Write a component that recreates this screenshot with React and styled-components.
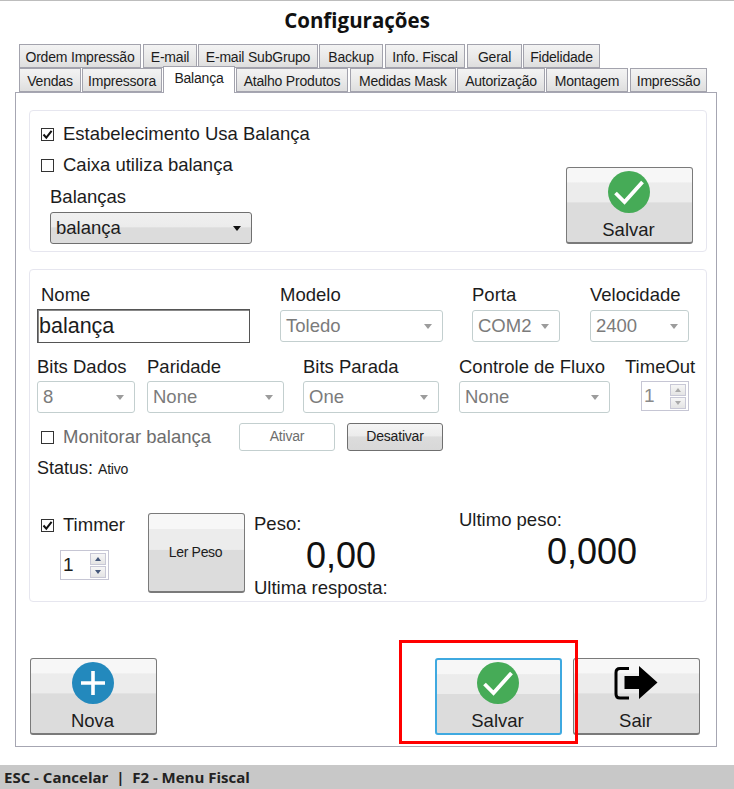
import React from 'react'
import styled, { createGlobalStyle } from 'styled-components'

const GlobalStyle = createGlobalStyle`
  html, body {
    margin: 0;
    padding: 0;
    background: #fff;
  }
  * {
    box-sizing: border-box;
  }
`

const Page = styled.div`
  width: 734px;
  height: 789px;
  overflow: hidden;
  display: flex;
  flex-direction: column;
  border-top: 1px solid #bdbdbd;
  font-family: 'Liberation Sans', Arial, sans-serif;
  color: #1c1c1c;
`

const Title = styled.h1`
  margin: 0;
  height: 43px;
  padding-right: 20px;
  display: flex;
  align-items: center;
  justify-content: center;
  padding-bottom: 5px;
  font-family: 'Open Sans', sans-serif;
  font-size: 20.5px;
  font-weight: 700;
  color: #111;
`

const TabRow = styled.div`
  display: flex;
  height: 24px;
  padding-left: 19px;
  align-items: flex-end;
`

const Tab = styled.div`
  width: ${(p) => p.$w}px;
  margin-right: ${(p) => p.$mr ?? 1}px;
  height: ${(p) => (p.$active ? 27 : 24)}px;
  margin-bottom: ${(p) => (p.$active ? -1 : 0)}px;
  display: flex;
  align-items: center;
  justify-content: center;
  padding-top: ${(p) => (p.$active ? 0 : 2)}px;
  padding-bottom: ${(p) => (p.$active ? 5 : 0)}px;
  border: 1px solid #a3a3ad;
  border-bottom: ${(p) => (p.$active ? 'none' : '1px solid #a3a3ad')};
  background: ${(p) => (p.$active ? '#fff' : 'linear-gradient(#f3f3f3, #e9e9e9 55%, #dedede)')};
  font-size: 14px;
  letter-spacing: -0.2px;
  white-space: nowrap;
  position: relative;
  z-index: ${(p) => (p.$active ? 2 : 0)};
`

const Panel = styled.div`
  margin-left: 15px;
  width: 702px;
  height: 655px;
  display: flex;
  flex-direction: column;
  border: 1px solid #a6a6b2;
  padding: 17px 10px 11px 13px;
  position: relative;
`

const Group = styled.div`
  width: 678px;
  height: ${(p) => p.$h}px;
  margin-bottom: 17px;
  border: 1px solid #e6e6ef;
  border-radius: 4px;
`

const TopGroup = styled(Group)`
  display: flex;
  justify-content: space-between;
  padding: 13px 13px 7px 11px;
`

const DetailGroup = styled(Group)`
  padding: 15px 0 0 7px;
`

const CheckRow = styled.label`
  display: flex;
  align-items: center;
  gap: 9px;
  height: 20px;
  margin: ${(p) => p.$m || '0'};
  font-size: 18.5px;
  white-space: nowrap;
  color: ${(p) => (p.$muted ? '#6d6d6d' : '#1c1c1c')};
`

const CheckBox = styled.span`
  width: 13px;
  height: 13px;
  flex: none;
  border: 1px solid #333;
  background: #fff;
  display: flex;
  align-items: center;
  justify-content: center;
`

const Label = styled.div`
  height: 20px;
  line-height: 20px;
  font-size: 18.5px;
  white-space: nowrap;
  margin-left: ${(p) => p.$ml || 0}px;
  margin-top: ${(p) => p.$mt || 0}px;
`

const SelectBox = styled.div`
  width: ${(p) => (p.$w ? `${p.$w}px` : '100%')};
  height: 32px;
  margin-top: ${(p) => p.$mt ?? 4}px;
  margin-left: ${(p) => p.$ml || 0}px;
  display: flex;
  align-items: center;
  justify-content: space-between;
  padding: 0 10px 0 5px;
  border-radius: 3px;
  font-size: 18.5px;
  border: 1px solid ${(p) => (p.$enabled ? '#6f6f6f' : '#c3cfcf')};
  color: ${(p) => (p.$enabled ? '#1c1c1c' : '#7b7b7b')};
  background: ${(p) => (p.$enabled ? 'linear-gradient(#f0f0f0, #ececec 45%, #dcdcdc 50%, #dcdcdc)' : '#fff')};
`

const Caret = styled.span`
  width: 0;
  height: 0;
  border-left: 4px solid transparent;
  border-right: 4px solid transparent;
  border-top: 5px solid ${(p) => (p.$enabled ? '#111' : '#9c9c9c')};
`

const Row = styled.div`
  display: flex;
  margin-top: ${(p) => p.$mt || 0}px;
  align-items: ${(p) => p.$align || 'flex-start'};
`

const Field = styled.div`
  width: ${(p) => p.$w}px;
  margin-left: ${(p) => p.$ml || 0}px;
`

const TextInput = styled.div`
  width: 100%;
  height: 34px;
  margin-top: 4px;
  border: 1px solid #555;
  box-shadow: inset 1px 1px 0 #888;
  padding-left: 1px;
  line-height: 32px;
  font-size: 21.5px;
  color: #1c1c1c;
`

const Spinner = styled.div`
  width: ${(p) => p.$w}px;
  height: 30px;
  margin: ${(p) => p.$m || '0'};
  display: flex;
  align-items: center;
  justify-content: space-between;
  padding: 0 2px 0 2px;
  border: 1px solid #c6c6d4;
  font-size: 19px;
  color: ${(p) => (p.$disabled ? '#8a8a8a' : '#1c1c1c')};
`

const SpinArrows = styled.div`
  width: 16px;
  display: flex;
  flex-direction: column;
  gap: 1px;
`

const SpinArrow = styled.span`
  height: 12px;
  display: flex;
  align-items: center;
  justify-content: center;
  border: 1px solid #c8c8d6;
  background: linear-gradient(#f6f6f6, #e4e4e4);
  &::after {
    content: '';
    width: 0;
    height: 0;
    border-left: 3px solid transparent;
    border-right: 3px solid transparent;
    ${(p) =>
      p.$down
        ? `border-top: 4px solid ${p.$disabled ? '#aaa' : '#44577a'};`
        : `border-bottom: 4px solid ${p.$disabled ? '#aaa' : '#44577a'};`}
  }
`

const SmallButton = styled.div`
  width: ${(p) => p.$w}px;
  height: 28px;
  margin-left: ${(p) => p.$ml || 0}px;
  display: flex;
  align-items: center;
  justify-content: center;
  padding-bottom: 2px;
  border-radius: 3px;
  font-size: 14px;
  letter-spacing: -0.2px;
  border: 1px solid ${(p) => (p.$disabled ? '#c3cfcf' : '#6f6f6f')};
  color: ${(p) => (p.$disabled ? '#6d6d6d' : '#1c1c1c')};
  background: ${(p) => (p.$disabled ? '#fff' : 'linear-gradient(#f4f4f4, #ececec 45%, #dcdcdc 50%, #d8d8d8)')};
`

const StatusLine = styled.div`
  height: 20px;
  line-height: 20px;
  margin-top: 7px;
  font-size: 18px;
  span {
    font-size: 14px;
    letter-spacing: -0.2px;
  }
`

const TimerColumn = styled.div`
  width: 111px;
  padding: 2px 0 0 4px;
`

const ReadingColumn = styled.div`
  width: ${(p) => p.$w}px;
  margin-left: ${(p) => p.$ml || 0}px;
  margin-top: ${(p) => p.$mt || 0}px;
`

const Value = styled.div`
  height: 44px;
  line-height: 44px;
  margin-left: ${(p) => p.$ml}px;
  font-size: 36px;
  color: #111;
`

const BigButton = styled.div`
  width: ${(p) => p.$w || 127}px;
  height: ${(p) => p.$h || 77}px;
  flex: none;
  display: flex;
  flex-direction: column;
  align-items: center;
  justify-content: ${(p) => (p.$center ? 'center' : 'flex-start')};
  align-self: ${(p) => (p.$end ? 'flex-end' : 'auto')};
  border-radius: 3px;
  border: ${(p) => (p.$focus ? '2px solid #3fa9e0' : '1px solid #7a7a7a')};
  border-bottom-width: 2px;
  padding-top: ${(p) => (p.$focus ? 1 : 2)}px;
  padding-right: 2px;
  font-size: ${(p) => (p.$center ? 14 : 18.5)}px;
  letter-spacing: ${(p) => (p.$center ? '-0.3px' : '0')};
  padding-bottom: ${(p) => (p.$center ? 3 : 0)}px;
  background: linear-gradient(#f7f7f7 0, #f7f7f7 19%, #ececec 20%, #ececec 46%, #dcdcdc 47%, #dcdcdc 100%);
  color: #1c1c1c;
  svg {
    display: block;
    margin-bottom: 5px;
  }
`

const BottomBar = styled.div`
  margin-top: auto;
  display: flex;
  padding: 0 6px 0 1px;
`

const SaveSlot = styled.div`
  margin-left: auto;
  margin-right: 11px;
  position: relative;
`

const Highlight = styled.div`
  position: absolute;
  left: -36px;
  top: -18px;
  width: 179px;
  height: 104px;
  border: 3px solid #f00;
  pointer-events: none;
  z-index: 3;
`

const StatusBar = styled.div`
  margin-top: auto;
  height: 24px;
  background: #c8c8c8;
  padding-left: 4px;
  display: flex;
  align-items: center;
  font-family: 'Open Sans', sans-serif;
  font-size: 15px;
  font-weight: 700;
  color: #222;
  white-space: pre;
`

const TickMark = () => (
  <svg width="11" height="11" viewBox="0 0 11 11">
    <path d="M1.5 5.5 L4.3 8.6 L9.6 1.8" fill="none" stroke="#111" strokeWidth="2" />
  </svg>
)

const Check = ({ checked, muted, m, children }) => (
  <CheckRow $muted={muted} $m={m}>
    <CheckBox>{checked && <TickMark />}</CheckBox>
    {children}
  </CheckRow>
)

const Select = ({ value, enabled, w, ml, mt }) => (
  <SelectBox $enabled={enabled} $w={w} $ml={ml} $mt={mt}>
    {value}
    <Caret $enabled={enabled} />
  </SelectBox>
)

const NumberSpin = ({ w, m, disabled }) => (
  <Spinner $w={w} $m={m} $disabled={disabled}>
    1
    <SpinArrows>
      <SpinArrow $disabled={disabled} />
      <SpinArrow $down $disabled={disabled} />
    </SpinArrows>
  </Spinner>
)

const OkIcon = () => (
  <svg width="44" height="44" viewBox="0 0 44 44">
    <circle cx="22" cy="22" r="21" fill="#46ab57" />
    <path d="M8.5 23 L17.5 32 L35.5 12" fill="none" stroke="#fff" strokeWidth="3.8" />
  </svg>
)

const PlusIcon = () => (
  <svg width="44" height="44" viewBox="0 0 44 44">
    <circle cx="22" cy="22" r="21" fill="#2389bd" />
    <path d="M22 10 V34 M10 22 H34" fill="none" stroke="#fff" strokeWidth="3.6" />
  </svg>
)

const ExitIcon = () => (
  <svg width="44" height="44" viewBox="0 0 44 44">
    <path d="M15 7.5 H6 Q2 7.5 2 11.5 V33 Q2 37 6 37 H15" fill="none" stroke="#000" strokeWidth="3" />
    <path d="M10.5 15 H25 V5 L43.5 21.5 L25 38 V28 H10.5 Z" fill="#000" />
  </svg>
)

export default function App() {
  return (
    <Page>
      <GlobalStyle />
      <Title>Configurações</Title>
      <TabRow>
        <Tab $w={122} $mr={2}>Ordem Impressão</Tab>
        <Tab $w={54}>E-mail</Tab>
        <Tab $w={120}>E-mail SubGrupo</Tab>
        <Tab $w={64} $mr={2}>Backup</Tab>
        <Tab $w={80} $mr={2}>Info. Fiscal</Tab>
        <Tab $w={55}>Geral</Tab>
        <Tab $w={77}>Fidelidade</Tab>
      </TabRow>
      <TabRow>
        <Tab $w={62}>Vendas</Tab>
        <Tab $w={80}>Impressora</Tab>
        <Tab $w={72} $active>Balança</Tab>
        <Tab $w={112} $mr={2}>Atalho Produtos</Tab>
        <Tab $w={106}>Medidas Mask</Tab>
        <Tab $w={88}>Autorização</Tab>
        <Tab $w={82} $mr={2}>Montagem</Tab>
        <Tab $w={77}>Impressão</Tab>
      </TabRow>
      <Panel>
        <TopGroup $h={142}>
          <div>
            <Check checked>Estabelecimento Usa Balança</Check>
            <Check m="11px 0 0">Caixa utiliza balança</Check>
            <Label $ml={9} $mt={12}>Balanças</Label>
            <Select value="balança" enabled w={202} ml={9} mt={5} />
          </div>
          <BigButton $end>
            <OkIcon />
            Salvar
          </BigButton>
        </TopGroup>
        <DetailGroup $h={333}>
          <Row>
            <Field $w={213}>
              <Label $ml={4}>Nome</Label>
              <TextInput>balança</TextInput>
            </Field>
            <Field $w={163} $ml={30}>
              <Label>Modelo</Label>
              <Select value="Toledo" mt={5} />
            </Field>
            <Field $w={88} $ml={29}>
              <Label>Porta</Label>
              <Select value="COM2" mt={5} />
            </Field>
            <Field $w={99} $ml={30}>
              <Label>Velocidade</Label>
              <Select value="2400" mt={5} />
            </Field>
          </Row>
          <Row $mt={14}>
            <Field $w={98}>
              <Label>Bits Dados</Label>
              <Select value="8" />
            </Field>
            <Field $w={137} $ml={12}>
              <Label>Paridade</Label>
              <Select value="None" />
            </Field>
            <Field $w={136} $ml={19}>
              <Label>Bits Parada</Label>
              <Select value="One" />
            </Field>
            <Field $w={151} $ml={20}>
              <Label>Controle de Fluxo</Label>
              <Select value="None" />
            </Field>
            <Field $w={70} $ml={15}>
              <Label>TimeOut</Label>
              <NumberSpin w={48} m="4px 0 0 16px" disabled />
            </Field>
          </Row>
          <Row $mt={10} $align="center">
            <Field $w={198} $ml={4}>
              <Check muted>Monitorar balança</Check>
            </Field>
            <SmallButton $w={96} $disabled>Ativar</SmallButton>
            <SmallButton $w={96} $ml={12}>Desativar</SmallButton>
          </Row>
          <StatusLine>
            Status: <span>Ativo</span>
          </StatusLine>
          <Row $mt={35}>
            <TimerColumn>
              <Check checked>Timmer</Check>
              <NumberSpin w={49} m="15px 0 0 19px" />
            </TimerColumn>
            <BigButton $w={97} $h={80} $center>Ler Peso</BigButton>
            <ReadingColumn $w={205} $ml={9} $mt={1}>
              <Label>Peso:</Label>
              <Value $ml={52}>0,00</Value>
              <Label>Ultima resposta:</Label>
            </ReadingColumn>
            <ReadingColumn $w={200} $mt={-3}>
              <Label>Ultimo peso:</Label>
              <Value $ml={88}>0,000</Value>
            </ReadingColumn>
          </Row>
        </DetailGroup>
        <BottomBar>
          <BigButton>
            <PlusIcon />
            Nova
          </BigButton>
          <SaveSlot>
            <BigButton $focus>
              <OkIcon />
              Salvar
            </BigButton>
            <Highlight />
          </SaveSlot>
          <BigButton>
            <ExitIcon />
            Sair
          </BigButton>
        </BottomBar>
      </Panel>
      <StatusBar>ESC - Cancelar  |  F2 - Menu Fiscal</StatusBar>
    </Page>
  )
}
